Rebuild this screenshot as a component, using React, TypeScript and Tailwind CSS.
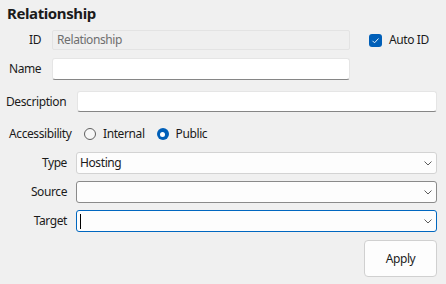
import React from "react";

function Chevron() {
  return (
    <svg width="10" height="6" viewBox="0 0 10 6" className="shrink-0">
      <path d="M1.5 1.5l3.5 3.5 3.5-3.5" fill="none" stroke="#5c5c5c" strokeWidth="1" />
    </svg>
  );
}

function Select({
  value,
  border,
  focused,
}: {
  value?: string;
  border: string;
  focused?: boolean;
}) {
  return (
    <div
      className={`flex h-[22px] w-[361px] items-center justify-between rounded-[3px] border bg-[#fdfdfd] pl-[3px] pr-[3px] ${border}`}
    >
      <span className="flex items-center">
        {focused && <span className="h-[15px] w-px bg-black" />}
        {value}
      </span>
      <Chevron />
    </div>
  );
}

export default function App() {
  return (
    <div className="h-[284px] w-[446px] bg-[#f0f0f0] font-['Segoe_UI','Noto_Sans',sans-serif] text-[12px] leading-none tracking-[-0.4px] text-[#1b1b1b]">
      {/* Header */}
      <div className="flex h-[30px] items-center pb-[3px] pl-[7px] text-[15px] font-bold">
        Relationship
      </div>

      {/* ID */}
      <div className="flex h-[20px] items-center">
        <div className="w-[52px] pr-[11px] text-right">ID</div>
        <div className="flex h-[20px] w-[298px] items-center rounded-[2px] border border-[#e3e3e3] bg-[#efefef] pl-[4px] text-[#6e6e6e]">
          Relationship
        </div>
        <div className="ml-[19px] flex items-center gap-[7px]">
          <span className="flex h-[13px] w-[13px] items-center justify-center rounded-[3px] bg-[#005fb8]">
            <svg width="9" height="9" viewBox="0 0 9 9">
              <path d="M1.5 4.8l2 2 4-4.3" fill="none" stroke="#fff" strokeWidth="0.9" />
            </svg>
          </span>
          <span>Auto ID</span>
        </div>
      </div>

      {/* Name */}
      <div className="mt-[8px] flex h-[22px] items-center">
        <div className="w-[52px] pl-[9px]">Name</div>
        <div className="h-[22px] w-[298px] rounded-[3px] border border-[#e5e5e5] border-b-[#868686] bg-white" />
      </div>

      {/* Description */}
      <div className="mt-[11px] flex h-[21px] items-center">
        <div className="w-[77px] pl-[6px]">Description</div>
        <div className="h-[21px] w-[360px] rounded-[3px] border border-[#e5e5e5] border-b-[#868686] bg-white" />
      </div>

      {/* Accessibility */}
      <div className="mt-[14px] flex h-[16px] items-center">
        <div className="w-[84px] pl-[9px]">Accessibility</div>
        <span className="h-[12px] w-[12px] rounded-full border border-[#5f5f5f] bg-[#f7f7f7]" />
        <span className="ml-[7px]">Internal</span>
        <span className="ml-[12px] flex h-[12px] w-[12px] items-center justify-center rounded-full bg-[#005fb8]">
          <span className="h-[5px] w-[5px] rounded-full bg-white" />
        </span>
        <span className="ml-[7px]">Public</span>
      </div>

      {/* Type / Source / Target */}
      <div className="mt-[10px] flex flex-col gap-[7px]">
        <div className="flex items-center">
          <div className="w-[76px] pr-[9px] text-right">Type</div>
          <Select value="Hosting" border="border-[#d3d3d3]" />
        </div>
        <div className="flex items-center">
          <div className="w-[76px] pr-[9px] text-right">Source</div>
          <Select border="border-[#8a8a8a]" />
        </div>
        <div className="flex items-center">
          <div className="w-[76px] pr-[9px] text-right">Target</div>
          <Select border="border-[#0067c0]" focused />
        </div>
      </div>

      {/* Apply */}
      <div className="mt-[8px] flex justify-end pr-[9px]">
        <button className="h-[37px] w-[73px] rounded-[4px] border border-[#d0d0d0] bg-[#fdfdfd] text-[12px] text-[#1b1b1b]">
          Apply
        </button>
      </div>
    </div>
  );
}
